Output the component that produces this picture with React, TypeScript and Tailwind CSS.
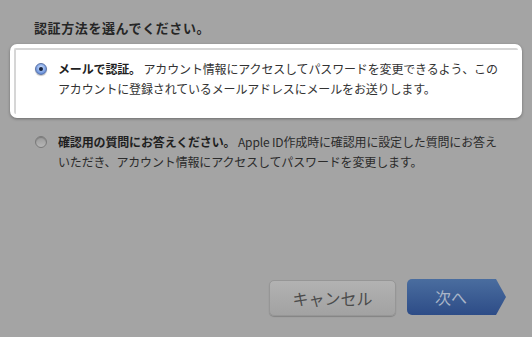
import React from 'react';

function Radio({ checked }: { checked: boolean }) {
    if (checked) {
        return (
            <span className="w-[12px] h-[12px] rounded-full shrink-0 flex items-center justify-center border border-[#5a72a6] bg-[radial-gradient(circle_at_50%_40%,#dbe6fb_0%,#8fb0ea_45%,#3f6bc4_100%)] shadow-[0_1px_1px_rgba(0,0,0,0.25)]">
                <span className="w-[4px] h-[4px] rounded-full bg-[#14213d]" />
            </span>
        );
    }
    return (
        <span className="block w-[12px] h-[12px] rounded-full shrink-0 border border-[#7a7a7a] bg-[linear-gradient(#9a9a9a,#b6b6b6)] shadow-[inset_0_1px_1px_rgba(0,0,0,0.2)]" />
    );
}

export default function App() {
    return (
        <div className="w-[532px] h-[337px] bg-[#a4a4a4] flex flex-col font-['Noto_Sans_CJK_JP','Noto_Sans',sans-serif] overflow-hidden">
            {/* Title */}
            <h2 className="pt-[19px] pl-[34px] text-[13px] leading-[18px] tracking-[0.6px] font-bold text-[#262626]">
                認証方法を選んでください。
            </h2>

            {/* Highlighted option */}
            <div className="mt-[7px] mx-[10px] h-[74px] rounded-[7px] bg-white p-[4px] shadow-[0_1px_3px_rgba(0,0,0,0.35)]">
                <div className="h-full rounded-[2px] border-t-2 border-l-2 border-[#d6d6d6] pl-[19px] pt-[9px]">
                    <div className="flex gap-[11px]">
                        <span className="pt-[4px]"><Radio checked /></span>
                        <p className="w-[443px] text-[12px] leading-[20px] tracking-[-0.15px] text-[#333]">
                            <span className="font-bold text-[#1f1f1f]">メールで認証。</span> アカウント情報にアクセスしてパスワードを変更できるよう、このアカウントに登録されているメールアドレスにメールをお送りします。
                        </p>
                    </div>
                </div>
            </div>

            {/* Second option */}
            <div className="pt-[14px] pl-[35px] flex gap-[11px]">
                <span className="pt-[4px]"><Radio checked={false} /></span>
                <p className="w-[443px] text-[12px] leading-[20px] tracking-[-0.15px] text-[#2b2b2b]">
                    <span className="font-bold text-[#1f1f1f]">確認用の質問にお答えください。</span> Apple ID作成時に確認用に設定した質問にお答えいただき、アカウント情報にアクセスしてパスワードを変更します。
                </p>
            </div>

            {/* Buttons */}
            <div className="mt-auto mb-[21px] mr-[26px] flex justify-end items-center gap-[11px]">
                <button className="w-[127px] h-[36px] rounded-[5px] border border-[#969696] bg-[linear-gradient(#b2b2b2,#a2a2a2)] shadow-[0_1px_1px_rgba(0,0,0,0.2)] text-[16px] text-[#4b4b4b]">
                    キャンセル
                </button>
                <button className="w-[99px] h-[36px] -mt-[2px] rounded-l-[5px] bg-[linear-gradient(#4a6d9f,#2d4c87)] [clip-path:polygon(0_0,89px_0,99px_50%,89px_100%,0_100%)] text-[16px] text-[#a9b5c8] flex items-center pl-[28px]">
                    次へ
                </button>
            </div>
        </div>
    );
}
